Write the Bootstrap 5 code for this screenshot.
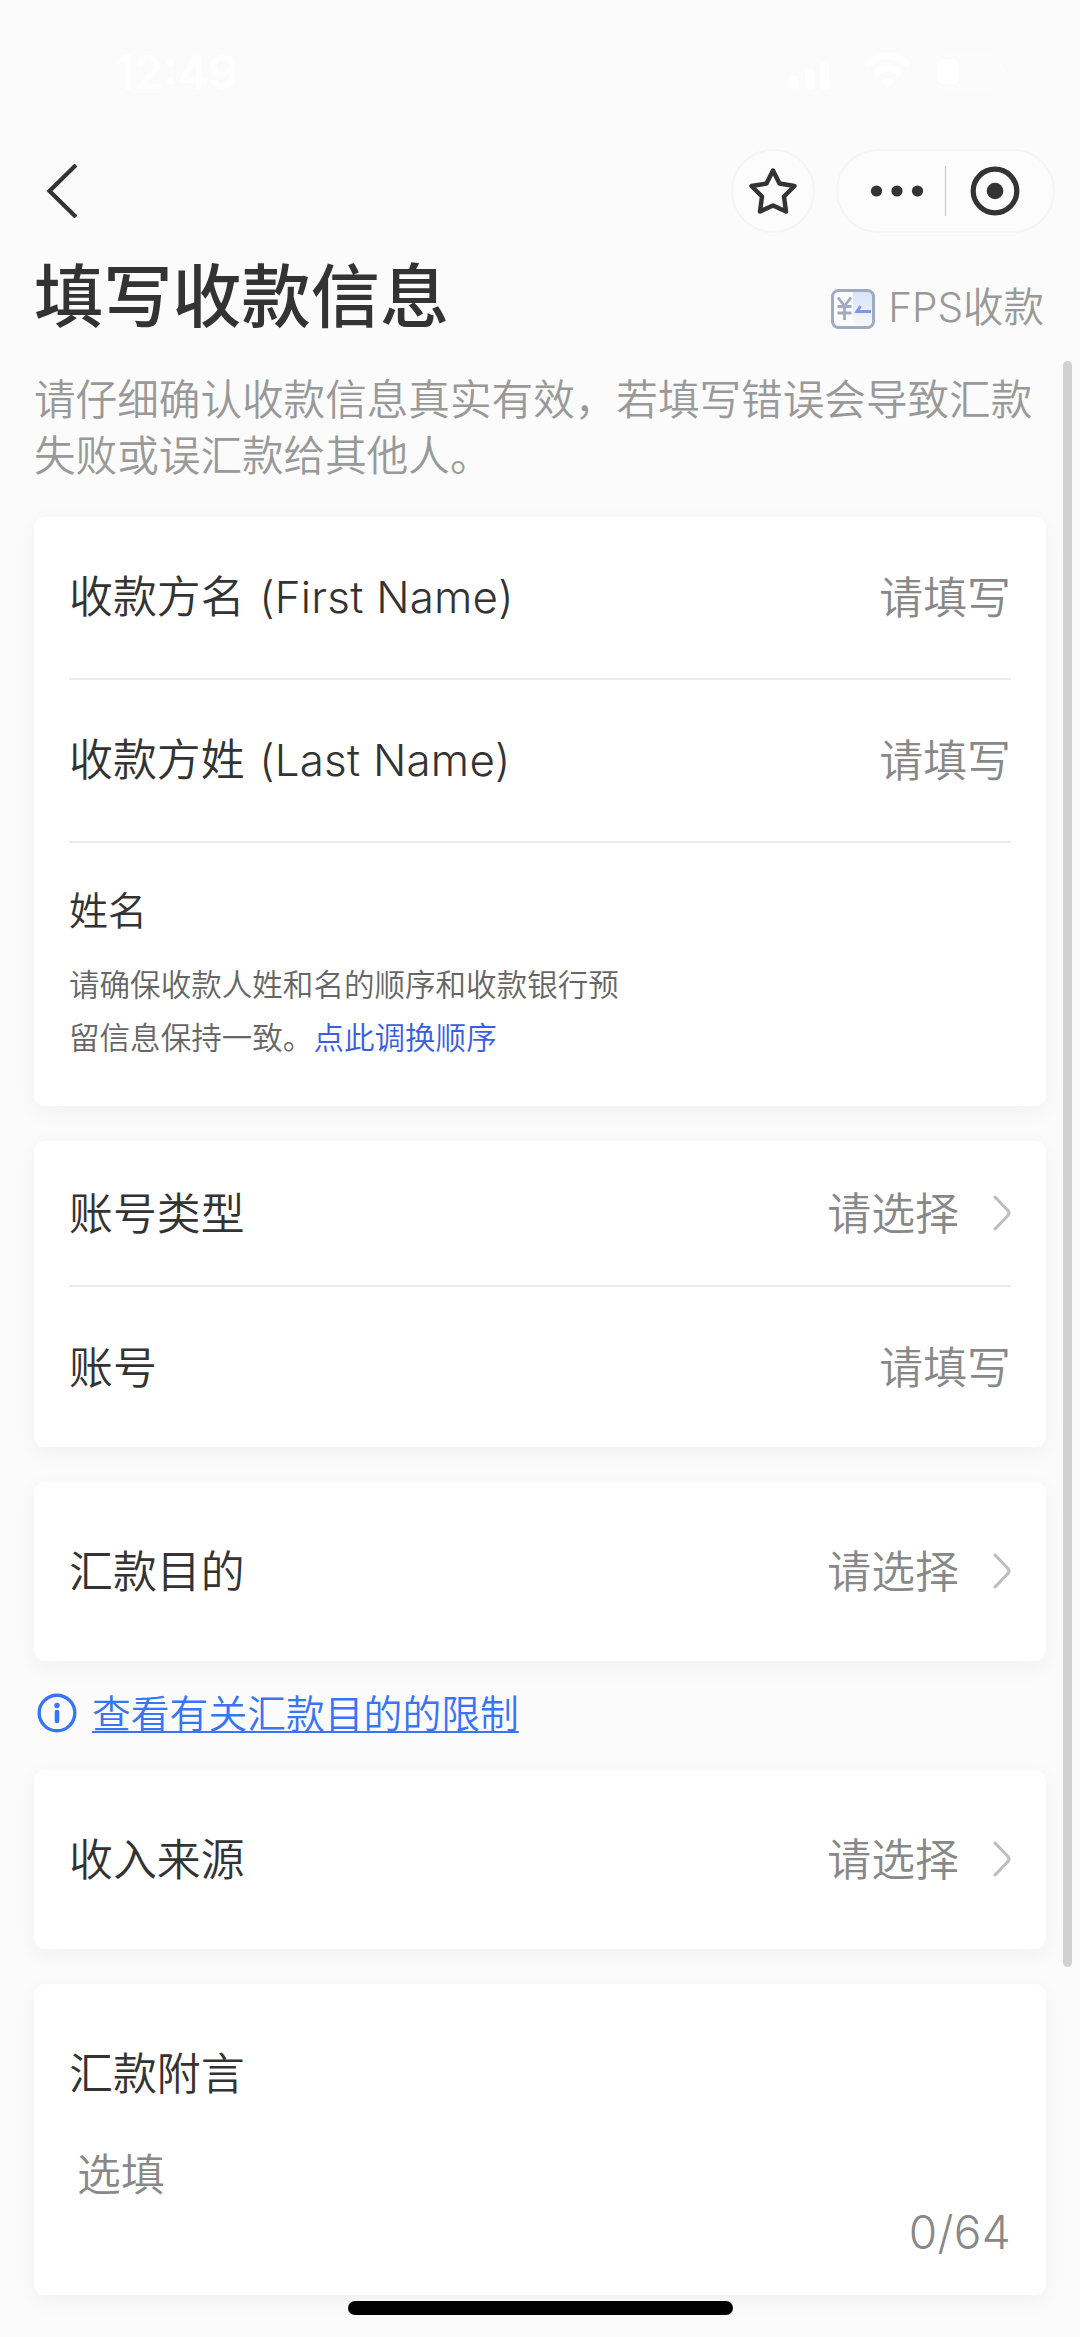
<!DOCTYPE html>
<html lang="zh-CN">
<head>
<meta charset="utf-8">
<meta name="viewport" content="width=device-width, initial-scale=1">
<title>填写收款信息</title>
<link href="https://cdn.jsdelivr.net/npm/bootstrap@5.3.0/dist/css/bootstrap.min.css" rel="stylesheet">
<style>
  body { background: #fbfbfb; color: #333; font-family: "Noto Sans CJK SC", sans-serif; font-size: 43.9px; line-height: 60px; font-weight: 350; }
  .screen { width: 1080px; height: 2337px; overflow: hidden; }
  .latin { font-family: Inter, "Noto Sans CJK SC", sans-serif; font-weight: 350; }
  .field .latin { margin-left: 2px; letter-spacing: .25px; }
  .status-bar { height: 142px; padding: 42px 74px 0 115px; color: #fff; }
  .clock { font: 600 46px/60px Inter, sans-serif; }
  .top-nav { height: 98px; padding: 0 25px 0 45px; }
  .pill { height: 84px; border: 2px solid #f5f5f5; border-radius: 42px; background: #fcfcfc; }
  .pill-star { width: 84px; margin-right: 21px; }
  .pill-menu { width: 219px; }
  .title-row { height: 129px; padding: 0 36px 0 34px; }
  .page-title { font-size: 69.2px; line-height: 104px; font-weight: 500; }
  .fps { padding-top: 35px; font-size: 40.5px; color: #999; }
  .fps svg { margin: 14px 5px 0 0; }
  .intro { height: 148px; padding: 0 34px; font-size: 41.6px; line-height: 56px; color: #999; }
  .panel { margin: 0 34px; padding: 0 35px; border: 0; border-radius: 11px; background: #fff; box-shadow: 0 6px 24px rgba(0,0,0,.045); }
  .field + .field, .field + .name-block { border-top: 2px solid #ebebeb; }
  .hint { color: #888; }
  .arrow { margin-left: 34px; }
  .small-title { margin: 38px 0 22px; font-size: 39px; line-height: 54px; }
  .tip { font-size: 30.55px; line-height: 52.8px; color: #666; }
  .tip a { color: #3a5ee0; }
  .limit { height: 109px; padding: 0 0 5px 37px; }
  .limit a { margin: 0 0 5px 15px; font-size: 38.8px; color: #3875f6; text-decoration: underline; text-decoration-thickness: 2px; text-underline-offset: 3px; text-decoration-skip-ink: none; }
  .scroll-thumb { left: 1063px; top: 361px; width: 9px; height: 1606px; border-radius: 5px; background: #d1d1d1; }
  .home-bar { left: 348px; top: 2301px; width: 385px; height: 14px; border-radius: 7px; background: #000; }
  .h-name { height: 161px; } .h-name2 { height: 163px; } .h-full { height: 265px; }
  .h-type { height: 144px; } .h-acct { height: 162px; }
  .h-one { height: 179px; }
  .h-note { height: 311px; }
  .note-title { margin-top: 57px; }
  .note-input { margin: 41px 0 0 8px; }
  .note-count { font-size: 46px; letter-spacing: .3px; }
  .gap-b { margin-bottom: 35px; }
  .field { padding-bottom: 5px; }
  .field.h-type { padding-bottom: 4px; }
  .field .arrow { position: relative; top: 2px; }
  svg { display: block; flex: none; }
</style>
<script src="https://cdn.jsdelivr.net/npm/bootstrap@5.3.0/dist/js/bootstrap.bundle.min.js"></script>
</head>
<body>
<svg width="0" height="0" class="position-absolute"><defs>
  <symbol id="chev" viewBox="0 0 18 36"><path d="M2 2 15 15.500Q17 18 15 20.500L2 34" fill="none" stroke="#bdbdbd" stroke-width="3" stroke-linecap="round"/></symbol>
</defs></svg>
<main class="screen position-relative">
  <div class="status-bar d-flex justify-content-between">
    <span class="clock">12:49</span>
    <svg width="216" height="60" viewBox="0 0 216 60" fill="#fff">
      <rect x="0" y="34" width="9" height="13" rx="3"/><rect x="15" y="27" width="9" height="20" rx="3"/><rect x="30" y="20" width="9" height="27" rx="3"/><rect x="45" y="12" width="9" height="35" rx="3" opacity=".35"/>
      <path d="M76 23Q98 4 119 23" fill="none" stroke="#fff" stroke-width="6"/><path d="M84 32Q98 20 111 32" fill="none" stroke="#fff" stroke-width="6"/><path d="M91 39Q98 34 104 39L98 46Z"/>
      <rect x="143" y="12" width="68" height="35" rx="11" fill="none" stroke="#fff" stroke-width="2" opacity=".4"/><path d="M213 25Q217 29 213 34Z" opacity=".5"/><rect x="147" y="17" width="22" height="25" rx="6"/>
    </svg>
  </div>
  <nav class="top-nav d-flex align-items-center">
    <svg width="34" height="54" viewBox="0 0 34 54"><path d="M31 1 4.500 27 31 53" fill="none" stroke="#333" stroke-width="4.200"/></svg>
    <div class="pill pill-star ms-auto d-flex align-items-center justify-content-center">
      <svg width="50" height="50" viewBox="0 0 50 50"><path d="M25 4.500 31.500 17.500 46.500 20 36 30.500 38 45.500 25 39.500 12 45.500 14 30.500 3.500 20 18.500 17.500Z" fill="none" stroke="#333" stroke-width="4.500" stroke-linejoin="round"/></svg>
    </div>
    <div class="pill pill-menu d-flex align-items-center">
      <svg width="215" height="80" viewBox="0 0 215 80"><g fill="#333"><circle cx="38.500" cy="40" r="5.600"/><circle cx="59" cy="40" r="5.600"/><circle cx="79.500" cy="40" r="5.600"/><circle cx="157" cy="40" r="8.300"/></g><path d="M107.500 15V65" stroke="#ccc" stroke-width="1.200"/><circle cx="157" cy="40" r="21.800" fill="none" stroke="#333" stroke-width="5.200"/></svg>
    </div>
  </nav>
  <header class="title-row d-flex justify-content-between">
    <h1 class="page-title m-0">填写收款信息</h1>
    <div class="fps d-flex gap-2">
      <svg width="44" height="40" viewBox="0 0 44 40"><defs><linearGradient id="g" x2="0" y2="1"><stop stop-color="#d7e4f8"/><stop offset="1" stop-color="#f8f9fe"/></linearGradient></defs><path d="M22 2H37Q42 2 42 7V33Q42 38 37 38H22Z" fill="url(#g)"/><rect x="1.500" y="1.500" width="41" height="37" rx="6" fill="none" stroke="#9eabc0" stroke-width="3"/><path d="M7 8.500 13.500 17 20 8.500M13.500 17V31M6.500 17.500H20.500M6.500 24H20.500" fill="none" stroke="#9eabc0" stroke-width="2.800"/><path d="M40 22.500H26L29.500 17" fill="none" stroke="#7e97eb" stroke-width="3"/></svg>
      <span><span class="latin">FPS</span>收款</span>
    </div>
  </header>
  <p class="intro m-0">请仔细确认收款信息真实有效，若填写错误会导致汇款<br>失败或误汇款给其他人。</p>

  <section class="panel card gap-b">
    <div class="field h-name d-flex align-items-center justify-content-between"><span>收款方名<span class="latin"> (First Name)</span></span><span class="hint">请填写</span></div>
    <div class="field h-name2 d-flex align-items-center justify-content-between"><span>收款方姓<span class="latin"> (Last Name)</span></span><span class="hint">请填写</span></div>
    <div class="name-block h-full">
      <div class="small-title">姓名</div>
      <div class="tip">请确保收款人姓和名的顺序和收款银行预<br>留信息保持一致。<a class="text-decoration-none" href="#">点此调换顺序</a></div>
    </div>
  </section>

  <section class="panel card gap-b">
    <div class="field h-type d-flex align-items-center"><span class="me-auto">账号类型</span><span class="hint">请选择</span><svg class="arrow" width="18" height="36"><use href="#chev"/></svg></div>
    <div class="field h-acct d-flex align-items-center justify-content-between"><span>账号</span><span class="hint">请填写</span></div>
  </section>

  <section class="panel card">
    <div class="field h-one d-flex align-items-center"><span class="me-auto">汇款目的</span><span class="hint">请选择</span><svg class="arrow" width="18" height="36"><use href="#chev"/></svg></div>
  </section>

  <div class="limit d-flex align-items-center">
    <svg width="40" height="40" viewBox="0 0 40 40"><circle cx="20" cy="20" r="17.800" fill="none" stroke="#3875f6" stroke-width="3.400"/><circle cx="20" cy="12.500" r="2.700" fill="#3875f6"/><path d="M20 19V28" stroke="#3875f6" stroke-width="4.600" stroke-linecap="round"/></svg>
    <a href="#">查看有关汇款目的的限制</a>
  </div>

  <section class="panel card gap-b">
    <div class="field h-one d-flex align-items-center"><span class="me-auto">收入来源</span><span class="hint">请选择</span><svg class="arrow" width="18" height="36"><use href="#chev"/></svg></div>
  </section>

  <section class="panel card h-note">
    <div class="note-title">汇款附言</div>
    <div class="note-input hint">选填</div>
    <div class="note-count hint latin text-end">0/64</div>
  </section>

  <div class="scroll-thumb position-absolute"></div>
  <div class="home-bar position-absolute"></div>
</main>
</body>
</html>
